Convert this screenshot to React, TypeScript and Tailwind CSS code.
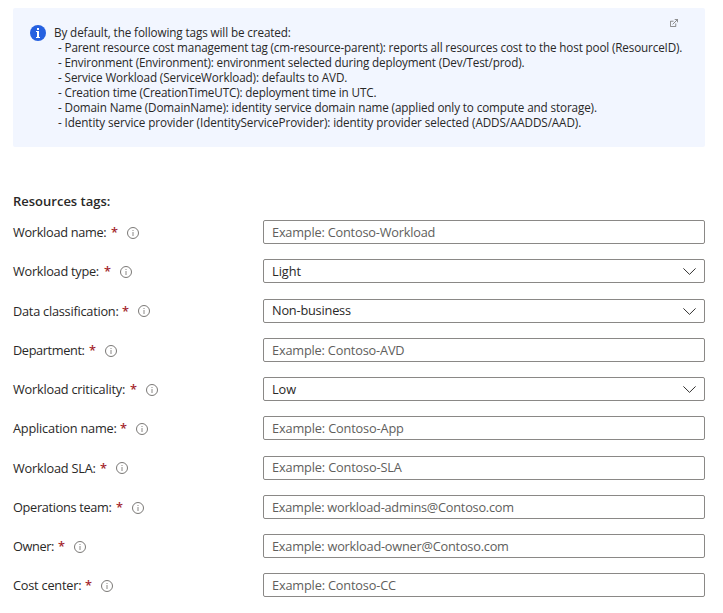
type Field = { label: string; labelClass: string; value: string; valueClass: string; select?: boolean };

const fields: Field[] = [
  { label: 'Workload name:', labelClass: 'w-[95px] tracking-[-0.31px]', value: 'Example: Contoso-Workload', valueClass: 'tracking-[-0.2px]' },
  { label: 'Workload type:', labelClass: 'w-[88px] tracking-[-0.27px]', value: 'Light', valueClass: '', select: true },
  { label: 'Data classification:', labelClass: 'w-[106px] tracking-[-0.24px]', value: 'Non-business', valueClass: 'tracking-[-0.2px]', select: true },
  { label: 'Department:', labelClass: 'w-[73px] tracking-[-0.38px]', value: 'Example: Contoso-AVD', valueClass: 'tracking-[-0.18px]' },
  { label: 'Workload criticality:', labelClass: 'w-[114px] tracking-[-0.22px]', value: 'Low', valueClass: 'tracking-[-0.1px]', select: true },
  { label: 'Application name:', labelClass: 'w-[104px] tracking-[-0.2px]', value: 'Example: Contoso-App', valueClass: 'tracking-[-0.15px]' },
  { label: 'Workload SLA:', labelClass: 'w-[84px] tracking-[-0.22px]', value: 'Example: Contoso-SLA', valueClass: 'tracking-[-0.15px]' },
  { label: 'Operations team:', labelClass: 'w-[100px] tracking-[-0.33px]', value: 'Example: workload-admins@Contoso.com', valueClass: 'tracking-[-0.24px]' },
  { label: 'Owner:', labelClass: 'w-[42px] tracking-[-0.38px]', value: 'Example: workload-owner@Contoso.com', valueClass: 'tracking-[-0.22px]' },
  { label: 'Cost center:', labelClass: 'w-[69px] tracking-[-0.22px]', value: 'Example: Contoso-CC', valueClass: 'tracking-[-0.17px]' },
];

const tags = [
  { text: '- Parent resource cost management tag (cm-resource-parent): reports all resources cost to the host pool (ResourceID).', cls: 'tracking-[-0.148px]' },
  { text: '- Environment (Environment): environment selected during deployment (Dev/Test/prod).', cls: 'tracking-[-0.16px]' },
  { text: '- Service Workload (ServiceWorkload): defaults to AVD.', cls: 'tracking-[-0.11px]' },
  { text: '- Creation time (CreationTimeUTC): deployment time in UTC.', cls: 'tracking-[-0.15px]' },
  { text: '- Domain Name (DomainName): identity service domain name (applied only to compute and storage).', cls: 'tracking-[-0.125px]' },
  { text: '- Identity service provider (IdentityServiceProvider): identity provider selected (ADDS/AADDS/AAD).', cls: 'tracking-[-0.095px]' },
];

function InfoOutline() {
  return (
    <svg className="ml-[10px] h-3 w-3 shrink-0" viewBox="0 0 12 12" fill="none">
      <circle cx="6" cy="6" r="5.5" stroke="#6b6967" strokeWidth="0.9" />
      <path d="M6 5v4" stroke="#8a8886" />
      <path d="M6 3v1" stroke="#8a8886" />
    </svg>
  );
}

function Chevron() {
  return (
    <svg className="h-[7px] w-[13px]" viewBox="0 0 13 7" fill="none">
      <path d="M0.4 0.4l6.1 6 6.1-6" stroke="#323130" strokeWidth="1" />
    </svg>
  );
}

export default function App() {
  return (
    <main className="h-[613px] w-[723px] overflow-hidden bg-white pl-[13px] pr-[18px] pt-2 font-['Open_Sans','Noto_Sans',sans-serif] text-[12.75px] text-[#292827]">
      <section className="flex h-[139px] rounded-[2px] bg-[#f2f6ff] pl-[17px] pt-[17px] text-[11.7px] leading-[15px]">
        <svg className="h-4 w-4 shrink-0" viewBox="0 0 16 16">
          <circle cx="8" cy="8" r="8" fill="#2560e0" />
          <rect x="7" y="3" width="2" height="2" fill="#fff" />
          <path d="M6 6h3v6h1v1H6v-1h1V7H6z" fill="#fff" />
        </svg>
        <div className="ml-2 w-[619px] whitespace-nowrap">
          <p><span className="tracking-[-0.11px]">By default, the following tags will be created:</span></p>
          {tags.map((t) => (
            <p key={t.text} className="pl-1"><span className={t.cls}>{t.text}</span></p>
          ))}
        </div>
        <svg className="-mt-[6px] ml-[-3px] h-[8px] w-[8px] shrink-0" viewBox="0 0 9 9" fill="none" stroke="#605e5c" strokeWidth="0.8">
          <path d="M4 2.5H0.5V8.5H6.5V5" />
          <path d="M3 6L8.2 0.8M5.3 0.5H8.5V3.7" />
        </svg>
      </section>
      <h2 className="mt-[44px] h-5 whitespace-nowrap text-[13px] font-semibold leading-5"><span>Resources tags:</span></h2>
      <div className="pt-[9px]">
        {fields.map((f) => (
          <div key={f.label} className="flex h-[39.25px] items-start">
            <div className="flex h-6 w-[250px] items-center whitespace-nowrap pt-[1.5px]">
              <span className={f.labelClass}>{f.label}</span>
              <span className="ml-[3px] w-[6px] font-semibold text-[#a4262c]">*</span>
              <InfoOutline />
            </div>
            <div className={`flex h-6 w-[442px] items-center justify-between whitespace-nowrap rounded-[2px] border border-[#8a8886] pl-2 pr-2 pt-px ${f.select ? 'text-[#292827]' : 'text-[#605e5c]'}`}>
              <span className={f.valueClass}>{f.value}</span>
              {f.select && <Chevron />}
            </div>
          </div>
        ))}
      </div>
    </main>
  );
}
